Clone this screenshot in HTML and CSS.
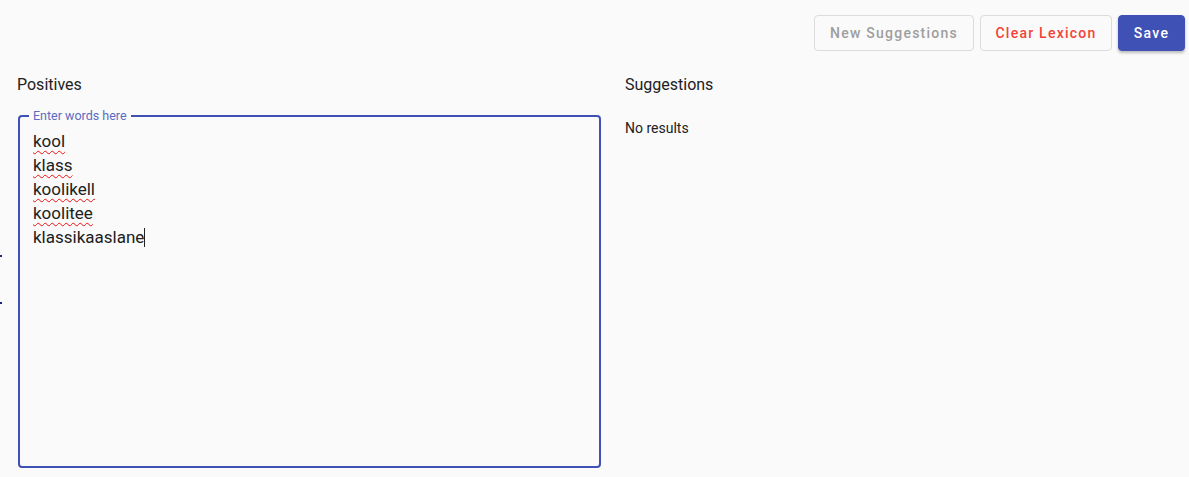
FILE: index.html
```html
<!DOCTYPE html>
<html lang="en">

<head>
    <meta charset="UTF-8">
    <meta name="viewport" content="width=device-width, initial-scale=1.0">
    <title>Lexicon</title>
    <link rel="stylesheet" href="styles.css">
</head>

<body>
    <div class="toolbar">
        <button class="btn btn-disabled">New Suggestions</button>
        <button class="btn btn-warn">Clear Lexicon</button>
        <button class="btn btn-primary">Save</button>
    </div>
    <div class="columns">
        <div class="col col-left">
            <h3 class="title">Positives</h3>
            <fieldset class="field">
                <legend>Enter words here</legend>
                <div class="words">
                    <div><span class="typo">kool</span></div>
                    <div><span class="typo">klass</span></div>
                    <div><span class="typo">koolikell</span></div>
                    <div><span class="typo">koolitee</span></div>
                    <div>klassikaaslane<span class="caret"></span></div>
                </div>
            </fieldset>
        </div>
        <div class="col col-right">
            <h3 class="title">Suggestions</h3>
            <p class="empty">No results</p>
        </div>
    </div>
    <span class="dot dot1"></span>
    <span class="dot dot2"></span>
</body>

</html>
```

FILE: styles.css
```css
* {
    padding: 0;
    margin: 0;
    box-sizing: border-box;
}

body {
    background: #fafafa;
    font-family: Roboto, "Liberation Sans", sans-serif;
    color: #212121;
    width: 1189px;
    height: 477px;
    overflow: hidden;
    position: relative;
}

.toolbar {
    display: flex;
    justify-content: flex-end;
    gap: 6px;
    padding: 15px 4px 0 0;
}

.btn {
    height: 36px;
    font-family: Roboto, "Liberation Sans", sans-serif;
    font-size: 14px;
    font-weight: 500;
    letter-spacing: 1.25px;
    white-space: nowrap;
    border-radius: 4px;
    background: #fafafa;
    border: 1px solid #dcdcdc;
    padding: 0 0 1px;
}

.btn-disabled {
    color: #9e9e9e;
    width: 160px;
}

.btn-warn {
    color: #f44336;
    width: 132px;
}

.btn-primary {
    color: #fff;
    background: #3f51b5;
    border-color: #3f51b5;
    width: 67px;
    box-shadow: 0 2px 3px rgba(0, 0, 0, 0.25);
}

.columns {
    display: flex;
    gap: 24px;
    padding: 22px 0 0 17px;
}

.col-left {
    width: 584px;
}

.title {
    font-size: 16px;
    font-weight: 400;
    line-height: 24px;
    color: #212121;
}

.field {
    margin-top: 12px;
    height: 359px;
    border: 2px solid #3f51b5;
    border-radius: 4px;
    padding: 0 13px;
    margin-left: 1px;
}

.field legend {
    font-size: 12.5px;
    color: #5c6bc0;
    padding: 0 4px;
    margin-left: -4px;
    line-height: 14px;
}

.words {
    font-size: 17px;
    line-height: 24px;
    color: #212121;
    padding-top: 6px;
}

.typo {
    text-decoration: underline wavy #f01010;
    text-decoration-thickness: 1px;
    text-underline-offset: 3px;
}

.caret {
    display: inline-block;
    width: 1px;
    height: 19px;
    background: #212121;
    vertical-align: -4px;
}

.empty {
    font-size: 14px;
    line-height: 20px;
    margin-top: 21px;
}

.dot {
    position: absolute;
    left: 0;
    width: 2px;
    height: 2px;
    background: #1a237e;
}

.dot1 {
    top: 255px;
}

.dot2 {
    top: 302px;
}
```
